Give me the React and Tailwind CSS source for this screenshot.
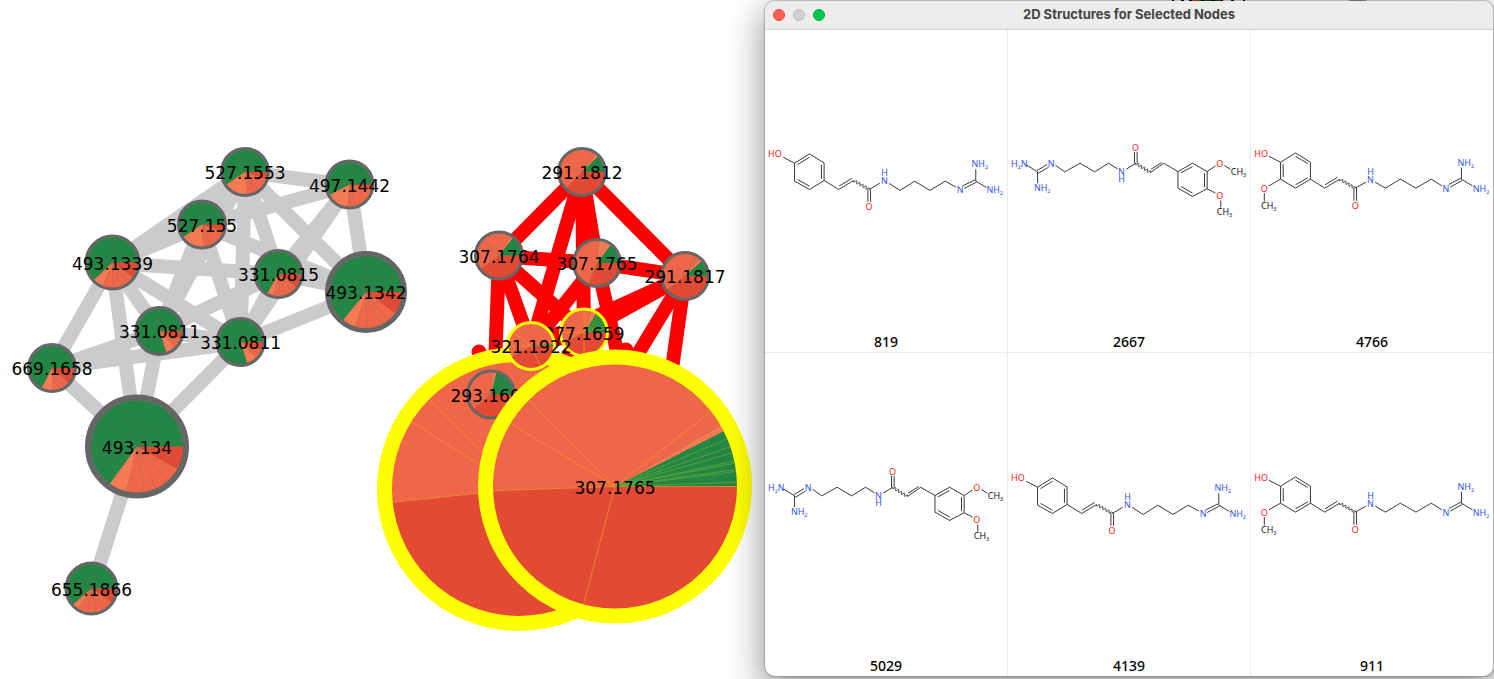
const GREEN = '#248644';
const LIGHT = '#f87a52';
const MID = '#ef6748';
const DARK = '#e34a33';

const polar = (x, y, r, deg) => {
  const a = (deg * Math.PI) / 180;
  return [x + r * Math.cos(a), y + r * Math.sin(a)];
};

// Each pie lists where the dark, mid and light slices end, clockwise from east; green fills the rest.
function Node({ x, y, r, ring = 3, pie, lines = [], label, selected = false }) {
  const inner = r - ring;
  const bounds = [0, ...pie, 360];
  const colors = [DARK, MID, LIGHT, GREEN];
  return (
    <g>
      <circle cx={x} cy={y} r={inner + 0.5} fill={GREEN} />
      {colors.map((c, i) => {
        const from = bounds[i];
        const to = bounds[i + 1];
        if (to <= from || c === GREEN) return null;
        const [x1, y1] = polar(x, y, inner + 0.5, from);
        const [x2, y2] = polar(x, y, inner + 0.5, to);
        return (
          <path
            key={c}
            fill={c}
            d={`M${x} ${y}L${x1} ${y1}A${inner + 0.5} ${inner + 0.5} 0 ${to - from > 180 ? 1 : 0} 1 ${x2} ${y2}Z`}
          />
        );
      })}
      {lines.map((deg) => {
        const [x2, y2] = polar(x, y, inner, deg);
        const stroke = selected ? (deg > pie[2] ? '#62a636' : '#f1902f') : '#666666';
        return (
          <line key={deg} x1={x} y1={y} x2={x2} y2={y2} stroke={stroke} strokeWidth={selected ? 0.8 : 0.5} strokeOpacity={selected ? 1 : 0.5} />
        );
      })}
      <circle cx={x} cy={y} r={r - ring / 2} fill="none" stroke={selected ? '#ffff00' : '#666666'} strokeWidth={ring} />
      <text x={x} y={y + 7} textAnchor="middle" fontSize="17" fill="#000">
        {label}
      </text>
    </g>
  );
}

const P = {
  a: [245, 172], b: [350, 185], c: [202, 225], d: [112, 263], e: [278.5, 274], f: [366, 292],
  g: [159.5, 331], h: [240.5, 342.5], i: [52, 368], j: [137, 446.5], k: [92, 588.5],
};
const GRAY_EDGES = ['ab', 'ac', 'ad', 'ae', 'af', 'ah', 'ag', 'bc', 'be', 'bh', 'bf', 'cd', 'cg', 'ch', 'cf', 'de', 'dg', 'dh', 'dj', 'di', 'ef', 'eg', 'eh', 'fh', 'gh', 'gi', 'hi', 'gj', 'hj', 'ij', 'jk'];

const RED_EDGES = [
  [582, 172, 499, 256], [582, 172, 685, 276], [582, 172, 531, 346], [582, 172, 584, 332],
  [582, 172, 597, 263], [499, 256, 597, 263], [597, 263, 685, 276], [499, 256, 494, 395],
  [499, 256, 531, 346], [499, 256, 584, 332], [597, 263, 531, 346], [597, 263, 628, 400],
  [685, 276, 584, 332], [685, 276, 531, 346], [685, 276, 610, 400], [685, 276, 662, 440],
  [531, 346, 584, 332], [584, 332, 615, 420], [584, 332, 540, 400],
];

const NODES = [
  { x: 245, y: 172, r: 25, pie: [18, 86, 146], lines: [55, 65, 200, 250, 300], label: '527.1553' },
  { x: 349.5, y: 184.5, r: 25, pie: [12, 95, 152], lines: [75, 90, 200, 250, 300], label: '497.1442' },
  { x: 202, y: 224.5, r: 25, pie: [18, 87, 146], lines: [58, 68, 200, 270, 310], label: '527.155' },
  { x: 112.5, y: 262.5, r: 28, pie: [36, 112, 137], lines: [18, 52, 70, 88, 200, 270], label: '493.1339' },
  { x: 278.5, y: 274, r: 25, pie: [36, 103, 120], lines: [18, 52, 70, 86, 200, 270], label: '331.0815' },
  { x: 366, y: 292, r: 41, ring: 5, pie: [36, 107, 129], lines: [20, 54, 67, 88, 160, 200, 235, 270, 310], label: '493.1342' },
  { x: 159.5, y: 331, r: 25, pie: [20, 46, 72], lines: [32, 200, 270], label: '331.0811' },
  { x: 240.5, y: 342, r: 25, pie: [20, 46, 72], lines: [32, 200, 270], label: '331.0811' },
  { x: 52, y: 368, r: 25, pie: [42, 88, 117], lines: [20, 56, 70, 200, 270], label: '669.1658' },
  { x: 137, y: 446.5, r: 52, ring: 6, pie: [29, 104, 126], lines: [16, 48, 66, 81, 155, 187, 220, 250, 275, 310], label: '493.134' },
  { x: 91.5, y: 588.5, r: 27, pie: [34, 124, 139], lines: [16, 50, 62, 80, 98, 200, 270], label: '655.1866' },
  { x: 582, y: 172, r: 25, pie: [134, 308, 316], lines: [84, 200, 300], label: '291.1812' },
  { x: 499, y: 255.5, r: 25, pie: [143, 302, 308], lines: [70, 218, 228], label: '307.1764' },
  { x: 597, y: 263, r: 25, pie: [112, 276, 307], lines: [55, 200, 290], label: '307.1765' },
  { x: 685, y: 276, r: 25, pie: [142, 310, 318], lines: [80, 180, 235, 300], label: '291.1817' },
  { x: 584, y: 332.5, r: 25, selected: true, pie: [150, 288, 303], lines: [90, 180, 270, 279, 310, 318, 326, 334, 342, 350], label: '277.1659' },
  { x: 519, y: 489, r: 142, ring: 15, selected: true, pie: [174, 330, 333], lines: [174, 212, 225], label: '' },
  { x: 491, y: 394.5, r: 25, pie: [140, 272, 284], lines: [180, 275], label: '293.1608' },
  { x: 531, y: 346, r: 25, selected: true, pie: [150, 354, 355], lines: [65, 180, 218, 357], label: '321.1922' },
  { x: 615, y: 486.5, r: 137, ring: 15, selected: true, pie: [178, 330, 333], lines: [0, 105, 178, 211, 225, 322, 337, 341, 344, 348, 349, 352, 353, 358], label: '307.1765' },
];

function Network() {
  return (
    <svg viewBox="0 0 765 679" className="block h-auto w-full" role="img" aria-label="Molecular network" fontFamily="'DejaVu Sans', sans-serif">
      <g stroke="#cbcbcb" strokeWidth="14">
        {GRAY_EDGES.map((e) => (
          <line key={e} x1={P[e[0]][0]} y1={P[e[0]][1]} x2={P[e[1]][0]} y2={P[e[1]][1]} />
        ))}
      </g>
      <g stroke="#ff0000" strokeWidth="14">
        {RED_EDGES.map(([x1, y1, x2, y2]) => (
          <line key={`${x1}-${y1}-${x2}-${y2}`} x1={x1} y1={y1} x2={x2} y2={y2} />
        ))}
      </g>
      <circle cx="479" cy="352" r="7.5" fill="#ff0000" />
      <circle cx="626" cy="350" r="7.5" fill="#ff0000" />
      {NODES.map((n) => (
        <Node key={`${n.x}-${n.y}`} {...n} />
      ))}
    </svg>
  );
}

const RED = '#fa1414';
const BLUE = '#3050f8';

// Squiggle bond of undefined stereochemistry between two atoms.
function wave(x1, y1, x2, y2) {
  const len = Math.hypot(x2 - x1, y2 - y1);
  const ux = (x2 - x1) / len;
  const uy = (y2 - y1) / len;
  const points = [];
  for (let s = 0; s <= 60; s += 1) {
    const t = (s / 60) * len;
    const off = 4 * Math.sin((s / 60) * Math.PI * 10);
    points.push(`${(x1 + ux * t - uy * off).toFixed(1)} ${(y1 + uy * t + ux * off).toFixed(1)}`);
  }
  return `M${points.join('L')}`;
}

function Atom({ x, y, color = '#111', children }) {
  return (
    <text x={x} y={y + 10} fontSize="27" fill={color} textAnchor="middle">
      {children}
    </text>
  );
}

// Amide nitrogen with its hydrogen stacked above or below it.
function Amide({ x, y, hydrogenY }) {
  return (
    <text fontSize="27" fill={BLUE} textAnchor="middle">
      <tspan x={x} y={y + 10}>N</tspan>
      <tspan x={x} y={hydrogenY + 10}>H</tspan>
    </text>
  );
}

function Group({ x, y, color = '#111', parts }) {
  return (
    <text x={x} y={y + 10} fontSize="27" fill={color}>
      {parts.map((p, i) =>
        /\d/.test(p) ? (
          <tspan key={i} fontSize="17" dy="5">{p}</tspan>
        ) : (
          <tspan key={i} dy={i > 0 ? -5 : 0}>{p}</tspan>
        )
      )}
    </text>
  );
}

function Drawing({ title, bonds, wavy, children }) {
  return (
    <svg viewBox="0 3 729 240" className="block h-auto w-full" role="img" aria-label={title} fontFamily="'Noto Sans', sans-serif">
      <path d={bonds} fill="none" stroke="#1a1a1a" strokeWidth="2.6" strokeLinejoin="round" />
      <path d={wave(...wavy)} fill="none" stroke="#1a1a1a" strokeWidth="2.6" />
      {children}
    </svg>
  );
}

function Coumaroyl() {
  return (
    <Drawing
      title="Coumaroyl agmatine"
      bonds="M55 52L89 70M89 70L134 42L178 69V122L134 149L89 124ZM98 74L134 52M170 75V117M134 139L98 119M178 122L222 149L267 122M223 139L261 116M314 149L346 130M310 149V186M318 149V186M374 131L407 152L451 124L497 152L543 124L575 142M600 146L637 127M596 138L633 120M635 124V88M635 124L667 143"
      wavy={[267, 122, 314, 149]}
    >
      <Group x={9} y={42} color={RED} parts={['HO']} />
      <Atom x={313} y={201} color={RED}>O</Atom>
      <Amide x={360} y={123} hydrogenY={98} />
      <Atom x={588} y={150} color={BLUE}>N</Atom>
      <Group x={622} y={72} color={BLUE} parts={['NH', '2']} />
      <Group x={667} y={151} color={BLUE} parts={['NH', '2']} />
    </Drawing>
  );
}

function Dimethoxy() {
  return (
    <Drawing
      title="Dimethoxycinnamoyl agmatine"
      bonds="M57 76L89 96M89 96V130M87 92L118 74M91 100L122 82M143 76L171 96L217 70L261 96L303 70L330 87M356 88L385 70M381 70V36M389 70V36M429 98L469 70L512 95M431 88L463 68M512 95L556 70L600 95V147L556 170L512 145ZM521 99L556 80M592 100V142M556 160L521 140M600 95L625 78M652 77L670 88M600 147L625 160M641 182V203"
      wavy={[385, 70, 429, 98]}
    >
      <Group x={9} y={71} color={BLUE} parts={['H', '2', 'N']} />
      <Atom x={130} y={70} color={BLUE}>N</Atom>
      <Group x={78} y={144} color={BLUE} parts={['NH', '2']} />
      <Amide x={342} y={94} hydrogenY={117} />
      <Atom x={384} y={22} color={RED}>O</Atom>
      <Atom x={638} y={71} color={RED}>O</Atom>
      <Atom x={638} y={168} color={RED}>O</Atom>
      <Group x={671} y={95} parts={['CH', '3']} />
      <Group x={629} y={217} parts={['CH', '3']} />
    </Drawing>
  );
}

function Feruloyl() {
  return (
    <Drawing
      title="Feruloyl agmatine"
      bonds="M54 49L89 67M89 67L134 39L179 67V118L134 145L89 118ZM134 49L171 71M97 73V112M171 114L134 135M89 118L54 138M40 160V185M179 118L222 145L267 118M223 135L261 112M314 145L346 127M310 145V183M318 145V183M374 127L405 145L450 118L497 145L543 118L575 138M600 142L636 122M596 134L632 115M634 118V84M634 118L667 138"
      wavy={[267, 118, 314, 145]}
    >
      <Group x={10} y={40} color={RED} parts={['HO']} />
      <Atom x={40} y={146} color={RED}>O</Atom>
      <Group x={30} y={198} parts={['CH', '3']} />
      <Atom x={314} y={198} color={RED}>O</Atom>
      <Amide x={360} y={119} hydrogenY={95} />
      <Atom x={587} y={146} color={BLUE}>N</Atom>
      <Group x={622} y={68} color={BLUE} parts={['NH', '2']} />
      <Group x={668} y={147} color={BLUE} parts={['NH', '2']} />
    </Drawing>
  );
}

const CELLS = [
  ['819', Coumaroyl],
  ['2667', Dimethoxy],
  ['4766', Feruloyl],
  ['5029', Dimethoxy],
  ['4139', Coumaroyl],
  ['911', Feruloyl],
];

function StructuresWindow() {
  return (
    <section className="relative flex flex-1 flex-col overflow-hidden rounded-[10px] border-r border-[#b5b5b5] bg-white shadow-[0_0_1px_1px_rgba(0,0,0,0.2),0_12px_34px_4px_rgba(0,0,0,0.38)]">
      <header className="grid h-[29px] shrink-0 grid-cols-[1fr_auto_1fr] items-center border-b border-[#d2d2d2] bg-[#ededeb] px-2">
        <div className="flex gap-2">
          <button type="button" aria-label="Close" className="size-3 rounded-full border border-[#e2463f] bg-[#ff5f57]" />
          <button type="button" aria-label="Minimize" className="size-3 rounded-full border border-[#bdbdbb] bg-[#d1d1cf]" />
          <button type="button" aria-label="Zoom" className="size-3 rounded-full border border-[#00ac3c] bg-[#00c84e]" />
        </div>
        <h1 className="font-['Inter',sans-serif] text-[13px] font-bold text-[#444444]">2D Structures for Selected Nodes</h1>
      </header>
      <div className="grid flex-1 grid-cols-[243fr_243fr_242fr] grid-rows-2">
        {CELLS.map(([id, Structure], i) => (
          <figure
            key={id}
            className={`flex flex-col border-[#ebebeb] ${i % 3 < 2 ? 'border-r' : ''} ${i < 3 ? 'border-b' : ''}`}
          >
            <div className="flex flex-1 items-center">
              <Structure />
            </div>
            <figcaption className="text-center font-['Noto_Sans',sans-serif] text-sm font-medium text-black">{id}</figcaption>
          </figure>
        ))}
      </div>
    </section>
  );
}

// Sliver of another node and its label showing above the window's top edge.
function HiddenNode() {
  return (
    <svg viewBox="0 0 729 2" className="absolute inset-x-0 top-0 h-auto w-full" aria-hidden="true">
      <rect x="426" width="8" height="2" fill="#e34a33" />
      <rect x="434" width="22" height="2" fill="#0f6a30" />
      <path d="M407 0h2v2h-2zM416 0h3v2h-3zM424 0h3v2h-3zM436 0h3v2h-3zM446 0h4v2h-4zM456 0h2v2h-2zM466 0h3v2h-3zM478 0h2v2h-2z" fill="#000" />
      <rect x="584" width="17" height="2" fill="#999" />
    </svg>
  );
}

export default function App() {
  return (
    <main className="grid min-h-screen grid-cols-[765fr_729fr] overflow-hidden bg-white">
      <Network />
      <div className="relative flex flex-col pt-px pb-[3px]">
        <HiddenNode />
        <StructuresWindow />
      </div>
    </main>
  );
}
